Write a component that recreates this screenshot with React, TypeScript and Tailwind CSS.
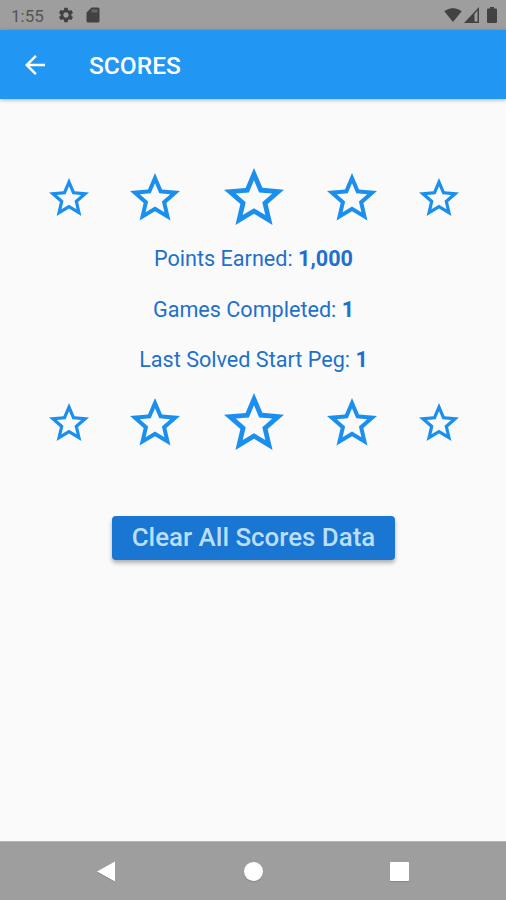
import { MdArrowBack, MdSettings, MdSignalWifi4Bar, MdStarBorder } from 'react-icons/md'

function StatusBar() {
  return (
    <div className="flex h-[30px] shrink-0 items-center bg-[#9e9e9e] text-[#424242]">
      <span className="ml-[11px] mt-[2px] w-[46px] text-[17px] leading-none text-[#555]">1:55</span>
      <MdSettings className="h-[18px] w-[18px]" />
      <svg viewBox="0 0 14 16" className="ml-[11px] h-[16px] w-[14px]" fill="currentColor">
        <path d="M5.5 0.5H12a1.5 1.5 0 0 1 1.5 1.5v12a1.5 1.5 0 0 1-1.5 1.5H2A1.5 1.5 0 0 1 .5 14V5.5z" />
        <path d="M5.5 2.5h6v3h-6z" fill="#666" />
      </svg>

      <div className="ml-auto mr-[9px] flex items-center">
        <MdSignalWifi4Bar className="h-[18px] w-[18px]" />
        <svg viewBox="0 0 15 16" className="ml-[2px] h-[16px] w-[15px]" fill="currentColor">
          <path fillRule="evenodd" d="M15 0v16H0zM10.5 7v7.5h3V3.6z" />
        </svg>
        <svg viewBox="0 0 10 16" className="ml-[8px] h-[16px] w-[10px]" fill="currentColor">
          <path d="M3 0h4v1.6h2a1 1 0 0 1 1 1V15a1 1 0 0 1-1 1H1a1 1 0 0 1-1-1V2.6a1 1 0 0 1 1-1h2z" />
        </svg>
      </div>
    </div>
  )
}

function AppBar() {
  return (
    <header className="z-10 flex h-[69px] shrink-0 items-center bg-[#2196f3] text-white shadow-[0_1px_4px_rgba(0,0,0,0.3)]">
      <MdArrowBack className="ml-[20px] h-[30px] w-[30px]" />
      <h1 className="ml-[39px] mt-[3px] text-[24.5px] font-medium leading-none">
        SCORES
      </h1>
    </header>
  )
}

function StarRow() {
  return (
    <div className="flex h-[72px] items-center justify-center gap-[32.5px] pl-px text-[#1a8fee]">
      <MdStarBorder className="h-[48px] w-[48px]" />
      <MdStarBorder className="h-[60px] w-[60px]" />
      <MdStarBorder className="h-[72px] w-[72px]" />
      <MdStarBorder className="h-[60px] w-[60px]" />
      <MdStarBorder className="h-[48px] w-[48px]" />
    </div>
  )
}

function ScoreLine({ label, value }: { label: string; value: string }) {
  return (
    <p className="text-center text-[21.6px] leading-[50.5px] text-[#1e70cd]">
      {label}: <b className="font-bold">{value}</b>
    </p>
  )
}

function NavigationBar() {
  return (
    <div className="flex h-[59px] shrink-0 items-center justify-between border-t border-[#b4b4b4] bg-[#9e9e9e] pl-[97px] pr-[97px] text-white">
      <svg viewBox="0 0 19 21" className="h-[21px] w-[19px] drop-shadow-[0_1px_0_rgba(0,0,0,0.15)]">
        <path d="M18 0.5v20L0 10.5z" fill="currentColor" />
      </svg>
      <div className="h-[19px] w-[19px] rounded-full bg-white shadow-[0_1px_1px_rgba(0,0,0,0.15)]" />
      <div className="h-[19px] w-[19px] rounded-[1px] bg-white shadow-[0_1px_1px_rgba(0,0,0,0.15)]" />
    </div>
  )
}

function App() {
  return (
    <div className="flex h-[900px] w-[506px] flex-col overflow-hidden bg-[#fafafa] font-['Roboto',sans-serif]">
      <StatusBar />
      <AppBar />

      <main className="flex flex-1 flex-col items-center pt-[63px]">
        <StarRow />
        <div className="pb-px pl-px">
          <ScoreLine label="Points Earned" value="1,000" />
          <ScoreLine label="Games Completed" value="1" />
          <ScoreLine label="Last Solved Start Peg" value="1" />
        </div>
        <StarRow />

        <button className="mt-[57px] h-[44px] w-[283px] rounded-[4px] bg-[#1976d2] pl-px pt-px text-[25.9px] font-medium leading-none text-[#bbdefb] shadow-[0_3px_4px_rgba(0,0,0,0.3)]">
          Clear All Scores Data
        </button>
      </main>

      <NavigationBar />
    </div>
  )
}

export default App
